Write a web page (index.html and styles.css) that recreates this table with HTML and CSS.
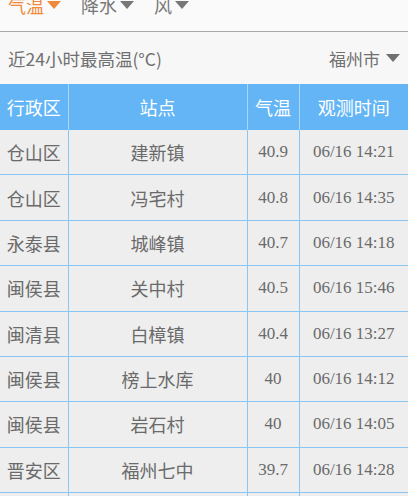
FILE: index.html
```html
<!DOCTYPE html>
<html lang="zh">
<head>
<meta charset="utf-8">
<link rel="stylesheet" href="styles.css">
</head>
<body>
<div class="tabs">
  <div class="tab active">气温<span class="tri"></span></div>
  <div class="tab">降水<span class="tri"></span></div>
  <div class="tab">风<span class="tri"></span></div>
</div>
<div class="sub">
  <div class="title">近24小时最高温(°C)</div>
  <div class="city">福州市<span class="tri"></span></div>
</div>
<table class="grid">
  <colgroup><col class="c1"><col class="c2"><col class="c3"><col class="c4"></colgroup>
  <thead>
    <tr><th>行政区</th><th>站点</th><th>气温</th><th>观测时间</th></tr>
  </thead>
  <tbody>
    <tr><td>仓山区</td><td>建新镇</td><td class="num">40.9</td><td class="num">06/16 14:21</td></tr>
    <tr><td>仓山区</td><td>冯宅村</td><td class="num">40.8</td><td class="num">06/16 14:35</td></tr>
    <tr><td>永泰县</td><td>城峰镇</td><td class="num">40.7</td><td class="num">06/16 14:18</td></tr>
    <tr><td>闽侯县</td><td>关中村</td><td class="num">40.5</td><td class="num">06/16 15:46</td></tr>
    <tr><td>闽清县</td><td>白樟镇</td><td class="num">40.4</td><td class="num">06/16 13:27</td></tr>
    <tr><td>闽侯县</td><td>榜上水库</td><td class="num">40</td><td class="num">06/16 14:12</td></tr>
    <tr><td>闽侯县</td><td>岩石村</td><td class="num">40</td><td class="num">06/16 14:05</td></tr>
    <tr><td>晋安区</td><td>福州七中</td><td class="num">39.7</td><td class="num">06/16 14:28</td></tr>
    <tr><td>晋安区</td><td>福州七中</td><td class="num">39.7</td><td class="num">06/16 14:28</td></tr>
  </tbody>
</table>
</body>
</html>
```
FILE: styles.css
```css
html, body {
  margin: 0;
  padding: 0;
  background: #f7f7f7;
  overflow: hidden;
  font-family: "Noto Sans CJK SC", "Noto Sans", sans-serif;
}
.tabs {
  display: flex;
  align-items: center;
  box-sizing: border-box;
  height: 41px;
  margin-top: -9px;
  padding: 0 0 12px 8px;
  gap: 20px;
  background: #fafafa;
  border-bottom: 1px solid #a8a8a8;
}
.tab {
  display: flex;
  align-items: center;
  font-size: 18px;
  line-height: 24px;
  color: #777;
}
.tab.active { color: #f0893a; }
.tri {
  display: inline-block;
  width: 0;
  height: 0;
  margin-left: 3px;
  border-left: 7px solid transparent;
  border-right: 7px solid transparent;
  border-top: 8px solid #777;
}
.tab.active .tri { border-top-color: #f0893a; }
.sub {
  display: flex;
  justify-content: space-between;
  align-items: center;
  height: 52px;
  padding: 0 8px;
  color: #707070;
  font-size: 17px;
}
.title { font-size: 17.5px; }
.city { display: flex; align-items: center; }
.city .tri { margin-left: 6px; border-top-color: #707070; }
.grid {
  width: 408px;
  border-collapse: collapse;
  table-layout: fixed;
}
.c1 { width: 68px; }
.c2 { width: 179px; }
.c3 { width: 52px; }
.c4 { width: 109px; }
th {
  background: #64b5f6;
  color: #fff;
  font-weight: normal;
  font-size: 18px;
  height: 46px;
  padding: 0;
  border-left: 1px solid #a9d6fb;
  text-align: center;
}
th:first-child, td:first-child { border-left: none; }
td {
  background: #eeeeee;
  color: #6a6a6a;
  font-size: 18px;
  height: 44.375px;
  padding: 0;
  text-align: center;
  border-left: 1.5px solid #8ac6f3;
  border-bottom: 1px solid #8ac6f3;
}
td.num {
  font-family: "Liberation Serif", serif;
  font-size: 17px;
}
```
